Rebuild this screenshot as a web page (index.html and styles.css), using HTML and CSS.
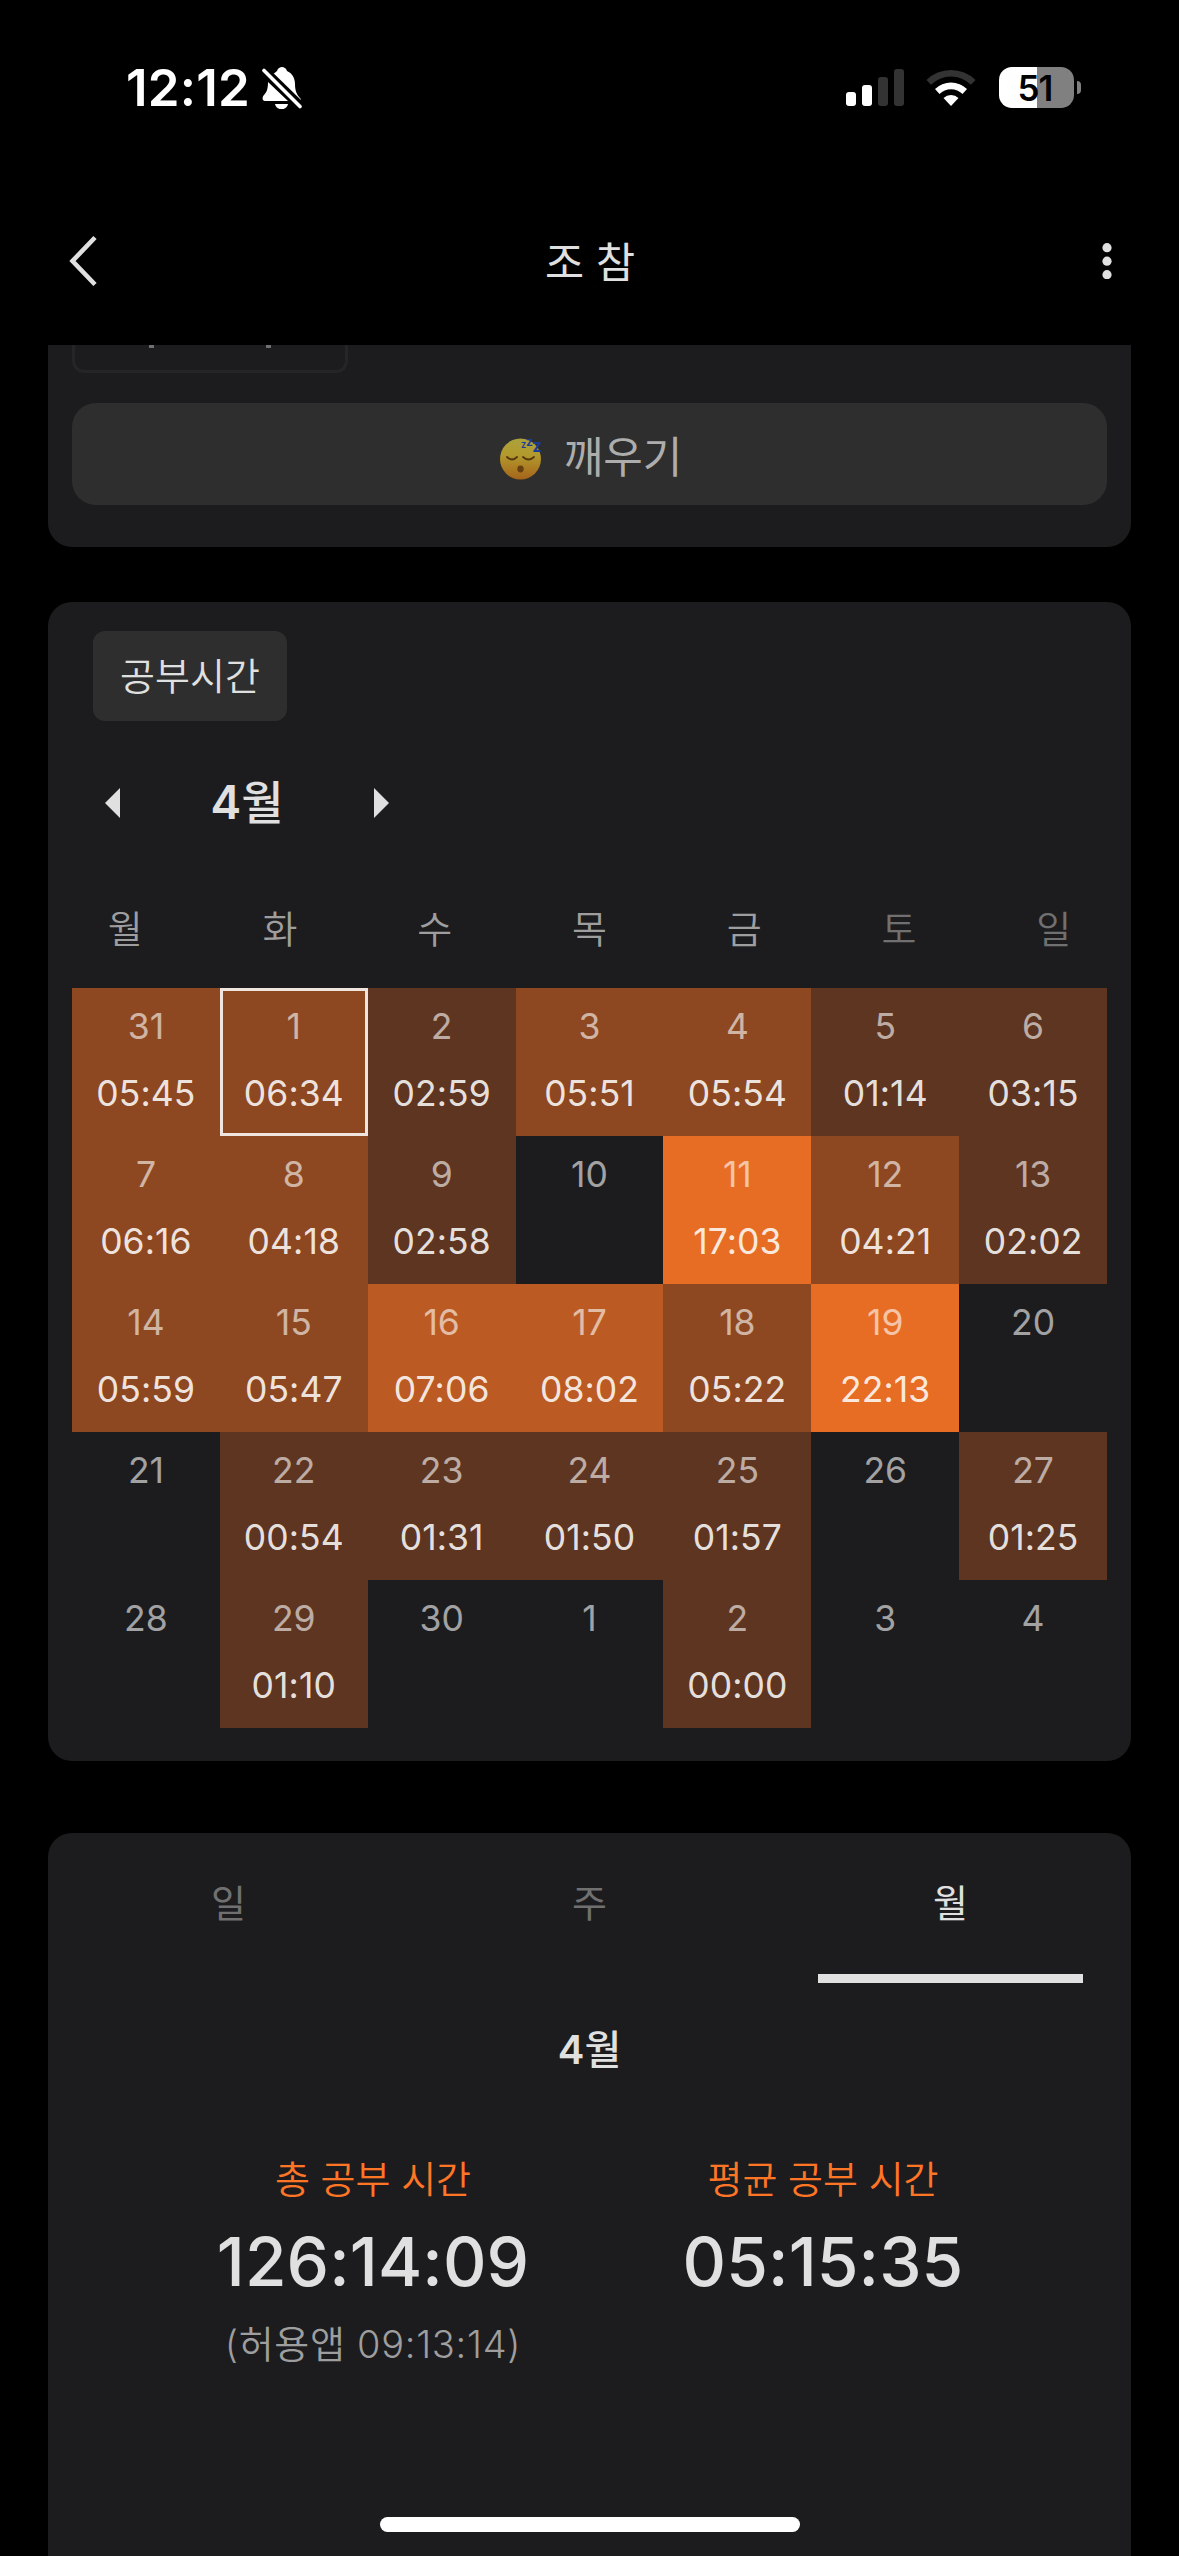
FILE: index.html
```html
<!DOCTYPE html>
<html lang="ko">
<head>
  <meta charset="UTF-8" />
  <title>조 참</title>
  <link rel="stylesheet" href="styles.css">
</head>
<body>

  <!-- 상태 표시줄 -->
  <div class="status">
    <div class="clock">12:12</div>
    <svg class="bell" viewBox="0 0 40 42">
      <path d="M10 8 C12 6 14 5 15 4 C16 1 18 0 20 0 C22 0 24 1 25 4 C30 6 33 11 33 17 C33 24 35 28 38 31 C39 32 39 33 39 34 Z" fill="#fff"/>
      <path d="M6 15 L26 34 H3 C0 34 0 30 2 28 C5 25 6 21 6 15 Z" fill="#fff"/>
      <path d="M13 37 H26 C25 44 14 44 13 37 Z" fill="#fff"/>
      <path d="M4 1 L40 36" stroke="#000" stroke-width="3" />
      <path d="M2 3.500 L38 39.500" stroke="#fff" stroke-width="3.6" stroke-linecap="round"/>
    </svg>
    <div class="status-right">
      <svg class="signal" viewBox="0 0 58 37">
        <rect x="0" y="23" width="10" height="14" rx="3" fill="#fff"/>
        <rect x="16" y="16" width="10" height="21" rx="3" fill="#fff"/>
        <rect x="32" y="8" width="10" height="29" rx="3" fill="#333"/>
        <rect x="48" y="0" width="10" height="37" rx="3" fill="#333"/>
      </svg>
      <svg class="wifi" viewBox="0 0 50 37">
        <path d="M0.5 11 A35 35 0 0 1 49.5 11 L45 15.7 A28.6 28.6 0 0 0 5 15.7 Z" fill="#333"/>
        <path d="M9 20 A23 23 0 0 1 41 20 L36.5 25 A16.5 16.5 0 0 0 13.500 25 Z" fill="#fff"/>
        <path d="M17.500 29 A11 11 0 0 1 32.500 29 L25 37 Z" fill="#fff"/>
      </svg>
      <div class="battery">51</div>
      <div class="battery-tip"></div>
    </div>
  </div>

  <!-- 상단 바 -->
  <div class="header">
    <svg class="back" viewBox="0 0 30 52">
      <path d="M27 2.500 L4.500 26 L27 49.500" fill="none" stroke="#e0e0e0" stroke-width="4.600"/>
    </svg>
    <div class="title">조 참</div>
    <svg class="more" viewBox="0 0 10 36">
      <circle cx="5" cy="4.700" r="4.600" fill="#e0e0e0"/>
      <circle cx="5" cy="18.200" r="4.600" fill="#e0e0e0"/>
      <circle cx="5" cy="31.700" r="4.600" fill="#e0e0e0"/>
    </svg>
  </div>

  <!-- 깨우기 -->
  <div class="card wake-card">
    <div class="cut-box"><i></i><i></i></div>
    <div class="wake">
      <svg class="sleepy" viewBox="0 0 42 42">
        <defs>
          <linearGradient id="face" x1="0" y1="0" x2="0" y2="1">
            <stop offset="0" stop-color="#aaa23c"/>
            <stop offset="0.400" stop-color="#b39a2d"/>
            <stop offset="1" stop-color="#a5641a"/>
          </linearGradient>
        </defs>
        <circle cx="20.500" cy="21" r="20.500" fill="url(#face)"/>
        <path d="M7 19 Q12 24 17 19 M23 19 Q28.500 24 34 19" fill="none" stroke="#54380f" stroke-width="1.800" stroke-linecap="round"/>
        <ellipse cx="20.500" cy="31" rx="3.200" ry="3.400" fill="#67400f"/>
        <text class="zz" x="21.300" y="10.300" font-size="7">Z</text>
        <text class="zz" x="26.300" y="7.700" font-size="9.500">Z</text>
        <text class="zz" x="32.500" y="13.700" font-size="13.500">Z</text>
      </svg>
      <span>깨우기</span>
    </div>
  </div>

  <!-- 달력 -->
  <div class="card calendar">
    <div class="chip">공부시간</div>
    <div class="month-nav">
      <div class="tri-left"></div>
      <div class="month">4<span>월</span></div>
      <div class="tri-right"></div>
    </div>
    <div class="weekdays">
      <div>월</div><div>화</div><div>수</div><div>목</div><div>금</div>
      <div class="weekend">토</div><div class="weekend">일</div>
    </div>
    <div class="days">
      <div class="day lv2"><b>31</b><span>05:45</span></div>
      <div class="day lv2 selected"><b>1</b><span>06:34</span></div>
      <div class="day lv1"><b>2</b><span>02:59</span></div>
      <div class="day lv2"><b>3</b><span>05:51</span></div>
      <div class="day lv2"><b>4</b><span>05:54</span></div>
      <div class="day lv1"><b>5</b><span>01:14</span></div>
      <div class="day lv1"><b>6</b><span>03:15</span></div>

      <div class="day lv2"><b>7</b><span>06:16</span></div>
      <div class="day lv2"><b>8</b><span>04:18</span></div>
      <div class="day lv1"><b>9</b><span>02:58</span></div>
      <div class="day"><b>10</b></div>
      <div class="day lv4"><b>11</b><span>17:03</span></div>
      <div class="day lv2"><b>12</b><span>04:21</span></div>
      <div class="day lv1"><b>13</b><span>02:02</span></div>

      <div class="day lv2"><b>14</b><span>05:59</span></div>
      <div class="day lv2"><b>15</b><span>05:47</span></div>
      <div class="day lv3"><b>16</b><span>07:06</span></div>
      <div class="day lv3"><b>17</b><span>08:02</span></div>
      <div class="day lv2"><b>18</b><span>05:22</span></div>
      <div class="day lv4"><b>19</b><span>22:13</span></div>
      <div class="day"><b>20</b></div>

      <div class="day"><b>21</b></div>
      <div class="day lv1"><b>22</b><span>00:54</span></div>
      <div class="day lv1"><b>23</b><span>01:31</span></div>
      <div class="day lv1"><b>24</b><span>01:50</span></div>
      <div class="day lv1"><b>25</b><span>01:57</span></div>
      <div class="day"><b>26</b></div>
      <div class="day lv1"><b>27</b><span>01:25</span></div>

      <div class="day"><b>28</b></div>
      <div class="day lv1"><b>29</b><span>01:10</span></div>
      <div class="day"><b>30</b></div>
      <div class="day"><b>1</b></div>
      <div class="day lv1"><b>2</b><span>00:00</span></div>
      <div class="day"><b>3</b></div>
      <div class="day"><b>4</b></div>
    </div>
  </div>

  <!-- 통계 -->
  <div class="card stats">
    <div class="tabs">
      <div class="tab">일</div>
      <div class="tab">주</div>
      <div class="tab active">월</div>
    </div>
    <div class="stats-month">4<span>월</span></div>
    <div class="totals">
      <div class="total">
        <div class="label">총 공부 시간</div>
        <div class="value">126:14:09</div>
        <div class="note">(허용앱 09:13:14)</div>
      </div>
      <div class="total">
        <div class="label">평균 공부 시간</div>
        <div class="value">05:15:35</div>
      </div>
    </div>
  </div>

  <div class="home-bar"></div>

</body>
</html>
```

FILE: styles.css
```css
* {
  box-sizing: border-box;
}

body {
  margin: 0;
  width: 1179px;
  height: 2556px;
  overflow: hidden;
  background: #000;
  color: #e0e0e0;
  font-family: "Inter", "Noto Sans CJK KR", sans-serif;
  display: flex;
  flex-direction: column;
}

svg {
  display: block;
  flex: none;
}

/* status bar */
.status {
  height: 176px;
  flex: none;
  display: flex;
  align-items: flex-start;
  padding: 67px 98px 0 126px;
}

.clock {
  width: 136px;
  font-size: 51px;
  font-weight: 600;
  line-height: 42px;
  letter-spacing: 0.2px;
  color: #fff;
}

.bell {
  width: 40px;
  height: 42px;
}

.status-right {
  margin-left: auto;
  display: flex;
  align-items: center;
}

.signal {
  width: 58px;
  height: 37px;
  margin-right: 22px;
}

.wifi {
  width: 50px;
  height: 37px;
  margin-right: 23px;
}

.battery {
  width: 75px;
  height: 41px;
  padding-right: 3px;
  border-radius: 13px;
  background: linear-gradient(to right, #fff 38px, #808080 38px);
  color: #000;
  font-size: 35px;
  font-weight: 600;
  line-height: 42px;
  letter-spacing: -1px;
  text-align: center;
}

.battery-tip {
  width: 4px;
  height: 13px;
  margin-left: 3px;
  border-radius: 0 4px 4px 0;
  background: #808080;
}

/* header */
.header {
  height: 169px;
  flex: none;
  display: grid;
  grid-template-columns: 1fr auto 1fr;
  align-items: center;
  padding: 1px 67px 0 68px;
}

.back {
  width: 30px;
  height: 52px;
}

.title {
  padding-top: 3px;
  font-size: 42.5px;
  font-weight: 400;
  line-height: 60px;
}

.more {
  width: 10px;
  height: 36px;
  justify-self: end;
}

/* cards */
.card {
  width: 1083px;
  margin-left: 48px;
  flex: none;
  border-radius: 24px;
  background: #1c1c1e;
}

.wake-card {
  height: 202px;
  padding: 0 24px;
  border-radius: 0 0 24px 24px;
}

.cut-box {
  width: 276px;
  height: 28px;
  border: 3px solid #252527;
  border-top: none;
  border-radius: 0 0 12px 12px;
  display: flex;
  gap: 112px;
  padding-left: 74px;
}

.cut-box i {
  width: 5px;
  height: 3px;
  background: #707070;
}

.wake {
  height: 102px;
  margin-top: 30px;
  padding: 6px 0 0 3px;
  border-radius: 24px;
  background: #2e2e2e;
  color: #adadad;
  display: flex;
  align-items: center;
  justify-content: center;
  gap: 22px;
  font-size: 43px;
}

.wake span {
  line-height: 60px;
}

.sleepy {
  width: 42px;
  height: 42px;
  margin-top: 3px;
  overflow: visible;
}

.zz {
  font-family: "Inter", sans-serif;
  font-weight: 800;
  fill: #1d3c96;
}

/* calendar */
.calendar {
  height: 1159px;
  margin-top: 55px;
  padding-top: 29px;
}

.chip {
  width: 194px;
  height: 90px;
  margin-left: 45px;
  border-radius: 12px;
  background: #2e2e2e;
  font-size: 38px;
  font-weight: 350;
  line-height: 90px;
  text-align: center;
}

.month-nav {
  height: 60px;
  margin: 52px 0 0 57px;
  width: 284px;
  display: flex;
  align-items: center;
  justify-content: space-between;
}

.tri-left,
.tri-right {
  border-top: 15px solid transparent;
  border-bottom: 15px solid transparent;
}

.tri-left {
  border-right: 15px solid #e0e0e0;
}

.tri-right {
  border-left: 15px solid #e0e0e0;
}

.month {
  margin-top: -2px;
  font-size: 46px;
  font-weight: 600;
  line-height: 60px;
}

.month span,
.stats-month span {
  font-weight: 500;
}

.weekdays {
  display: grid;
  grid-template-columns: repeat(7, 1fr);
  margin-top: 66px;
  text-align: center;
  font-size: 38px;
  font-weight: 350;
  line-height: 60px;
  color: #9e9e9e;
}

.weekend {
  color: #707070;
}

.days {
  display: grid;
  grid-template-columns: repeat(7, 1fr);
  grid-auto-rows: 148px;
  margin: 29px 24px 0;
}

.day {
  display: flex;
  flex-direction: column;
  align-items: center;
  padding-top: 18px;
  font-size: 35.5px;
  line-height: 42px;
}

.day b {
  font-weight: 400;
  color: rgba(255, 255, 255, 0.6);
}

.day span {
  margin-top: 25px;
  font-weight: 400;
  letter-spacing: 0.1px;
  color: rgba(255, 255, 255, 0.87);
}

.lv1 { background: #5e3521; }
.lv2 { background: #8d4821; }
.lv3 { background: #bb5b23; }
.lv4 { background: #e86d24; }

.selected {
  box-shadow: inset 0 0 0 3px #efe4de;
}

/* stats */
.stats {
  height: 740px;
  margin-top: 72px;
  border-radius: 24px 24px 0 0;
}

.tabs {
  display: grid;
  grid-template-columns: repeat(3, 1fr);
  height: 150px;
}

.tab {
  display: flex;
  flex-direction: column;
  align-items: center;
  padding-top: 40px;
  font-size: 38px;
  line-height: 60px;
  color: #707070;
}

.active {
  color: #e0e0e0;
}

.active::after {
  content: "";
  width: 265px;
  height: 9px;
  margin-top: 41px;
  background: #e0e0e0;
}

.stats-month {
  margin-top: 37px;
  text-align: center;
  font-size: 40px;
  font-weight: 600;
  line-height: 60px;
}

.totals {
  display: grid;
  grid-template-columns: 450px 450px;
  justify-content: center;
  margin: 72px 0 0 17px;
  text-align: center;
}

.label {
  color: #ff7526;
  font-size: 38px;
  font-weight: 350;
  line-height: 54px;
}

.value {
  margin-top: 14px;
  font-size: 67.5px;
  font-weight: 500;
  line-height: 84px;
  letter-spacing: 0.1px;
}

.note {
  margin-top: 10px;
  color: #9e9e9e;
  font-size: 38px;
  font-weight: 350;
  line-height: 60px;
  letter-spacing: 0.7px;
}

.home-bar {
  position: absolute;
  left: 380px;
  top: 2517px;
  width: 420px;
  height: 15px;
  border-radius: 8px;
  background: #fff;
}
```
